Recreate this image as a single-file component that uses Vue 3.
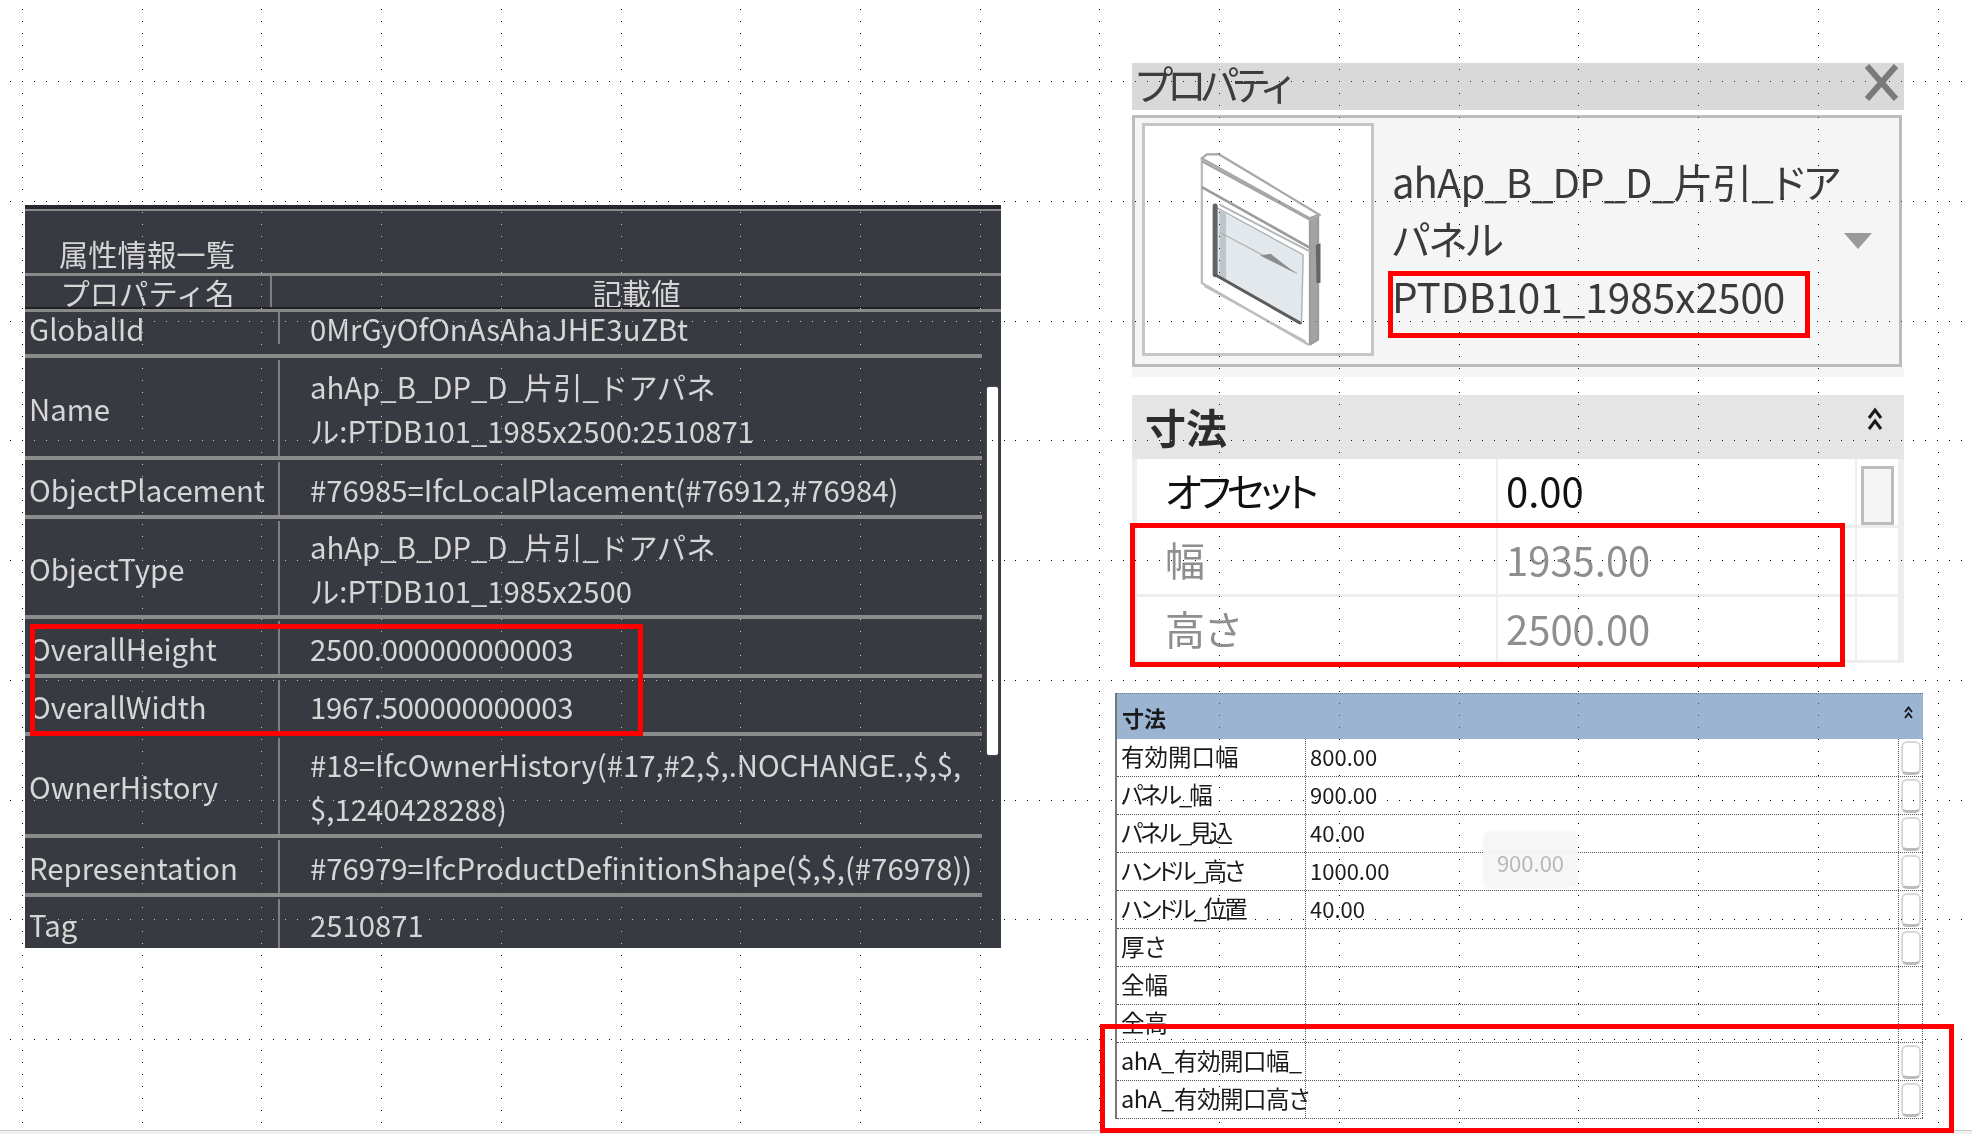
<script setup>
const ifcRows = [
  { label: 'GlobalId', lines: ['0MrGyOfOnAsAhaJHE3uZBt'], h: 46 },
  { label: 'Name', lines: ['ahAp_B_DP_D_片引_ドアパネ', 'ル:PTDB101_1985x2500:2510871'], h: 102 },
  { label: 'ObjectPlacement', lines: ['#76985=IfcLocalPlacement(#76912,#76984)'], h: 59 },
  { label: 'ObjectType', lines: ['ahAp_B_DP_D_片引_ドアパネ', 'ル:PTDB101_1985x2500'], h: 100 },
  { label: 'OverallHeight', lines: ['2500.000000000003'], h: 59, tight: true },
  { label: 'OverallWidth', lines: ['1967.500000000003'], h: 58, tight: true },
  { label: 'OwnerHistory', lines: ['#18=IfcOwnerHistory(#17,#2,$,.NOCHANGE.,$,$,', '$,1240428288)'], h: 102 },
  { label: 'Representation', lines: ['#76979=IfcProductDefinitionShape($,$,(#76978))'], h: 59 },
  { label: 'Tag', lines: ['2510871'], h: 51 }
]

const sizeRows = [
  { label: 'オフセット', value: '0.00', h: 69, box: true, tight: true },
  { label: '幅', value: '1935.00', h: 69, grey: true },
  { label: '高さ', value: '2500.00', h: 66, grey: true }
]

const familyRows = [
  { label: '有効開口幅', value: '800.00', box: true },
  { label: 'パネル_幅', value: '900.00', box: true, tight: true },
  { label: 'パネル_見込', value: '40.00', box: true, tight: true },
  { label: 'ハンドル_高さ', value: '1000.00', box: true, tight: true },
  { label: 'ハンドル_位置', value: '40.00', box: true, tight: true },
  { label: '厚さ', value: '', box: true },
  { label: '全幅', value: '' },
  { label: '全高', value: '' },
  { label: 'ahA_有効開口幅_', value: '', box: true, latin: true },
  { label: 'ahA_有効開口高さ', value: '', box: true, latin: true }
]

// the dotted guide grid lies over everything, one pixel per dot
function buildDots() {
  let d = ''
  const dot = (x, y) => `M${Math.round(x)} ${Math.round(y)}h1v1h-1z`
  for (let k = 0; k < 17; k++) {
    for (let j = 0; j < 95; j++) {
      if ((j - 6) % 10 !== 0) d += dot(22 + 119.72 * k, 9 + 11.97 * j)
    }
  }
  for (let k = 0; k < 9; k++) {
    for (let j = 0; j < 165; j++) d += dot(10 + 11.97 * j, 81 + 119.75 * k)
  }
  return d
}
const dots = buildDots()
</script>

<template>
  <div class="page">
    <div class="canvas">
      <section class="ifc">
        <div class="ifc-top"></div>
        <div class="ifc-title">属性情報一覧</div>
        <div class="ifc-head">
          <div class="ifc-head-name">プロパティ名</div>
          <div class="ifc-head-value">記載値</div>
        </div>
        <div class="ifc-body">
          <div v-for="row in ifcRows" :key="row.label" class="ifc-row" :style="{ height: row.h + 'px' }">
            <div class="ifc-label">{{ row.label }}</div>
            <div class="ifc-value" :class="{ tight: row.tight }">
              <div v-for="line in row.lines" :key="line">{{ line }}</div>
            </div>
          </div>
        </div>
        <div class="ifc-scroll"></div>
        <div class="mark mark-ifc"></div>
      </section>

      <div class="right">
        <section class="props">
          <div class="props-title">
            <span>プロパティ</span>
            <svg class="close" viewBox="0 0 35 37" width="35" height="37">
              <path d="M3 2 L32 35 M32 2 L3 35" stroke="#7a7a7a" stroke-width="6" fill="none" />
            </svg>
          </div>
          <div class="type-box">
            <div class="thumb">
              <svg viewBox="14 19 680 680" width="226" height="227">
                <g fill="none" stroke-linejoin="round" stroke-linecap="round">
                  <path d="M510 295 L535 285 L535 660 L510 675 Z" fill="#a3a3a3" stroke="#9a9a9a" stroke-width="6" />
                  <path d="M528 375 L542 370 L542 490 L530 490 Z" fill="#666" />
                  <path d="M185 115 L185 490 L505 675" stroke="#bcbcbc" stroke-width="7" />
                  <path d="M185 115 L200 103 L235 102 L540 285 L515 298 Z" stroke="#a9a9a9" stroke-width="7" />
                  <path d="M188 125 L512 300" stroke="#a5a5a5" stroke-width="7" />
                  <path d="M188 203 L512 385" stroke="#9c9c9c" stroke-width="8" />
                  <path d="M240 255 L510 395" stroke="#b5b5b5" stroke-width="6" />
                  <path d="M195 500 L495 665" stroke="#bdbdbd" stroke-width="6" />
                  <path d="M228 262 L490 405 L485 612 L228 468 Z" fill="#e2e8ec" stroke="#a9afb2" stroke-width="4" />
                  <path d="M238 270 L258 282 L258 482 L238 470 Z" fill="#bdc6ca" />
                  <path d="M225 258 L225 465" stroke="#646464" stroke-width="15" />
                  <path d="M225 465 L480 610" stroke="#5c5c5c" stroke-width="9" />
                  <path d="M240 338 L470 460" stroke="#b4b4b4" stroke-width="4" />
                  <path d="M360 407 L392 402 L466 460 Z" fill="#8c8c8c" />
                </g>
              </svg>
            </div>
            <div class="type-name">
              <div class="type-line">ahAp_B_DP_D_片引_ドア</div>
              <div class="type-line">パネル</div>
              <div class="type-code">PTDB101_1985x2500</div>
            </div>
            <svg class="drop" viewBox="0 0 28 16" width="28" height="16"><path d="M0 0 H28 L14 16 Z" fill="#9a9a9a" /></svg>
            <div class="mark mark-type"></div>
          </div>
          <div class="type-foot"></div>
        </section>

        <section class="size">
          <div class="size-head">
            <span>寸法</span>
            <svg viewBox="0 0 16 24" width="16" height="24">
              <path d="M2 11 L8 3 L14 11 M2 22 L8 14 L14 22" stroke="#1a1a1a" stroke-width="3" fill="none" />
            </svg>
          </div>
          <div v-for="row in sizeRows" :key="row.label" class="size-row" :class="{ grey: row.grey }" :style="{ height: row.h + 'px' }">
            <div class="size-label" :class="{ tight: row.tight }">{{ row.label }}</div>
            <div class="size-value">{{ row.value }}</div>
            <div class="size-check"><div v-if="row.box" class="size-box"></div></div>
          </div>
          <div class="mark mark-size"></div>
        </section>

        <section class="family">
          <div class="family-head">
            <span>寸法</span>
            <svg viewBox="0 0 9 13" width="9" height="13">
              <path d="M1 6 L4.5 1.5 L8 6 M1 12 L4.5 7.5 L8 12" stroke="#111" stroke-width="1.8" fill="none" />
            </svg>
          </div>
          <div v-for="row in familyRows" :key="row.label" class="family-row">
            <div class="family-label" :class="{ tight: row.tight, latin: row.latin }">{{ row.label }}</div>
            <div class="family-value">{{ row.value }}</div>
            <div class="family-check"><div v-if="row.box" class="family-box"></div></div>
          </div>
          <div class="tip">900.00</div>
          <div class="mark mark-family"></div>
        </section>
      </div>
    </div>
    <div class="strip"></div>

    <svg class="dots" width="1972" height="1134" viewBox="0 0 1972 1134" shape-rendering="crispEdges">
      <path :d="dots" fill="#fff" />
    </svg>
  </div>
</template>

<style scoped>
.page {
  position: relative;
  width: 1972px;
  height: 1134px;
  overflow: hidden;
  background: #fff;
  font-family: "Noto Sans CJK JP", "Noto Sans", sans-serif;
}

.canvas {
  display: flex;
  height: 1130px;
}

.strip {
  height: 3px;
  border-top: 1px solid #c9c9c9;
  background: #eef1f1;
}

.dots {
  position: absolute;
  left: 0;
  top: 0;
  z-index: 5;
  mix-blend-mode: difference;
  pointer-events: none;
}

.mark {
  position: absolute;
  z-index: 6;
  box-sizing: border-box;
  border: 5px solid #f00;
}

/* dark IFC table */
.ifc {
  position: relative;
  flex: none;
  width: 976px;
  height: 743px;
  margin: 205px 0 0 25px;
  background: #383a42;
  color: #d6d6d6;
  font-size: 29.3px;
}

.ifc-top {
  height: 4px;
  background: #27282d;
  border-bottom: 2px solid #8a8a8a;
}

.ifc-title {
  box-sizing: border-box;
  height: 62px;
  padding: 22px 0 0 34px;
  line-height: 40px;
}

.ifc-head {
  display: flex;
  height: 33px;
  border-top: 3px solid #8a8a8a;
  line-height: 32px;
}

.ifc-head-name {
  flex: none;
  width: 245px;
  border-right: 2px solid #7f7f7f;
  text-align: center;
}

.ifc-head-value {
  flex: 1;
  text-align: center;
}

.ifc-body {
  position: relative;
  border-top: 3px solid #8a8a8a;
}

.ifc-body::before {
  content: '';
  position: absolute;
  left: 0;
  top: -5px;
  width: 957px;
  height: 2px;
  background: #1f2024;
}

.ifc-row {
  box-sizing: border-box;
  display: flex;
  width: 957px;
  padding-top: 2px;
  border-bottom: 4px solid #8c8c8c;
}

.ifc-row:first-child {
  padding: 0 0 10px;
}

.ifc-row:last-child {
  border-bottom: none;
}

.ifc-label {
  flex: none;
  box-sizing: border-box;
  width: 255px;
  padding-left: 4px;
  display: flex;
  align-items: center;
  white-space: nowrap;
}

.ifc-value {
  flex: 1;
  padding-left: 30px;
  border-left: 2px solid #7f7f7f;
  margin-left: -2px;
  display: flex;
  flex-direction: column;
  justify-content: center;
  line-height: 44px;
  white-space: nowrap;
}

.ifc-value.tight {
  letter-spacing: -0.3px;
}

.ifc-scroll {
  position: absolute;
  left: 962px;
  top: 182px;
  width: 11px;
  height: 368px;
  background: #fff;
  border-radius: 2px;
  box-shadow: 0 0 2px #777;
}

.mark-ifc {
  left: 5px;
  top: 419px;
  width: 613px;
  height: 112px;
}

/* right column */
.right {
  flex: none;
  width: 808px;
  margin-left: 114px;
  padding-top: 63px;
}

.props {
  width: 772px;
  margin-left: 17px;
}

.props-title {
  display: flex;
  align-items: flex-start;
  justify-content: space-between;
  height: 47px;
  padding: 0 5px 0 4px;
  background: #d9d9d9;
  color: #3d3d3d;
  font-size: 40px;
  letter-spacing: -5.5px;
  line-height: 40px;
  font-feature-settings: "palt";
}

.close {
  margin-top: 1px;
}

.type-box {
  position: relative;
  box-sizing: border-box;
  display: flex;
  width: 770px;
  height: 252px;
  margin-top: 5px;
  padding: 5px 0 0 7px;
  border: 3px solid #bcbcbc;
  background: #f5f5f5;
}

.type-foot {
  height: 10px;
  background: #f5f5f5;
}

.thumb {
  flex: none;
  box-sizing: border-box;
  width: 232px;
  height: 233px;
  border: 3px solid #c6c6c6;
  background: #fff;
}

.thumb svg {
  display: block;
}

.type-name {
  margin: 30px 0 0 18px;
  color: #3a3a3a;
  line-height: 57px;
  font-feature-settings: "palt";
  white-space: nowrap;
}

.type-line {
  font-size: 40px;
  letter-spacing: -0.9px;
}

.type-code {
  font-size: 40.5px;
}

.drop {
  position: absolute;
  left: 709px;
  top: 115px;
}

.mark-type {
  left: 253px;
  top: 153px;
  width: 422px;
  height: 67px;
}

.size {
  position: relative;
  width: 772px;
  margin: 18px 0 0 17px;
}

.size-head {
  display: flex;
  justify-content: space-between;
  box-sizing: border-box;
  height: 64px;
  padding: 0 21px 0 13px;
  background: #e5e5e5;
  color: #2d2d2d;
  font-size: 41px;
  font-weight: 700;
  line-height: 62px;
}

.size-head svg {
  margin-top: 12px;
}

.size-row {
  box-sizing: border-box;
  display: flex;
  border: solid #eee;
  border-width: 0 6px 3px 5px;
  font-size: 40px;
  color: #111;
  font-feature-settings: "palt";
}

.size-row:last-of-type {
  border-bottom: none;
}

.size-row.grey {
  color: #8e8e8e;
}

.size-label {
  flex: none;
  box-sizing: border-box;
  width: 361px;
  padding-left: 28px;
  border-right: 2px solid #eee;
  line-height: 62px;
}

.size-label.tight {
  letter-spacing: -4.2px;
}

.size-value {
  flex: none;
  width: 359px;
  padding-left: 8px;
  border-right: 2px solid #eee;
  box-sizing: border-box;
  line-height: 62px;
}

.size-check {
  flex: 1;
  padding: 7px 0 0 4px;
}

.size-box {
  box-sizing: border-box;
  width: 33px;
  height: 59px;
  border: 3px solid #bdbdbd;
  background: #f5f5f5;
}

.mark-size {
  left: -2px;
  top: 128px;
  width: 715px;
  height: 144px;
}

/* family parameter table */
.family {
  position: relative;
  width: 808px;
  margin-top: 30px;
  border-left: 2px solid #777;
  box-sizing: border-box;
  font-size: 23.5px;
  color: #1a1a1a;
  font-feature-settings: "palt";
}

.family-head {
  display: flex;
  justify-content: space-between;
  box-sizing: border-box;
  height: 46px;
  padding: 0 10px 0 5px;
  background: #9bb4d2;
  border-top: 1px dotted #777;
  font-size: 22px;
  font-weight: 700;
  line-height: 46px;
}

.family-head svg {
  margin-top: 12px;
}

.family-row {
  display: flex;
  box-sizing: border-box;
  height: 38px;
  border-bottom: 1px dotted #555;
  line-height: 34px;
  white-space: nowrap;
}

.family-row:last-of-type {
  border-bottom: none;
}

.family-label {
  flex: none;
  box-sizing: border-box;
  width: 189px;
  padding-left: 4px;
  border-right: 1px dotted #555;
}

.family-label.tight {
  letter-spacing: -2.9px;
}

.family-label.latin {
  letter-spacing: -0.5px;
}

.family-value {
  flex: none;
  box-sizing: border-box;
  width: 593px;
  padding-left: 4px;
  border-right: 1px dotted #555;
  font-size: 22px;
}

.family-check {
  flex: 1;
  box-sizing: border-box;
  padding: 2px 1px 0 2px;
  border-right: 1px dotted #555;
}

.family-box {
  box-sizing: border-box;
  height: 34px;
  border: 2px solid #d8d8d8;
  border-bottom: 3px solid #bbb;
  border-radius: 6px;
}

.tip {
  position: absolute;
  left: 367px;
  top: 139px;
  width: 93px;
  height: 55px;
  border-radius: 6px;
  background: rgba(245, 245, 245, 0.92);
  box-shadow: 0 0 4px rgba(0, 0, 0, 0.06);
  color: #b8b8b8;
  font-size: 22px;
  line-height: 60px;
  text-align: center;
}

.mark-family {
  left: -17px;
  top: 331px;
  width: 854px;
  height: 109px;
}
</style>
